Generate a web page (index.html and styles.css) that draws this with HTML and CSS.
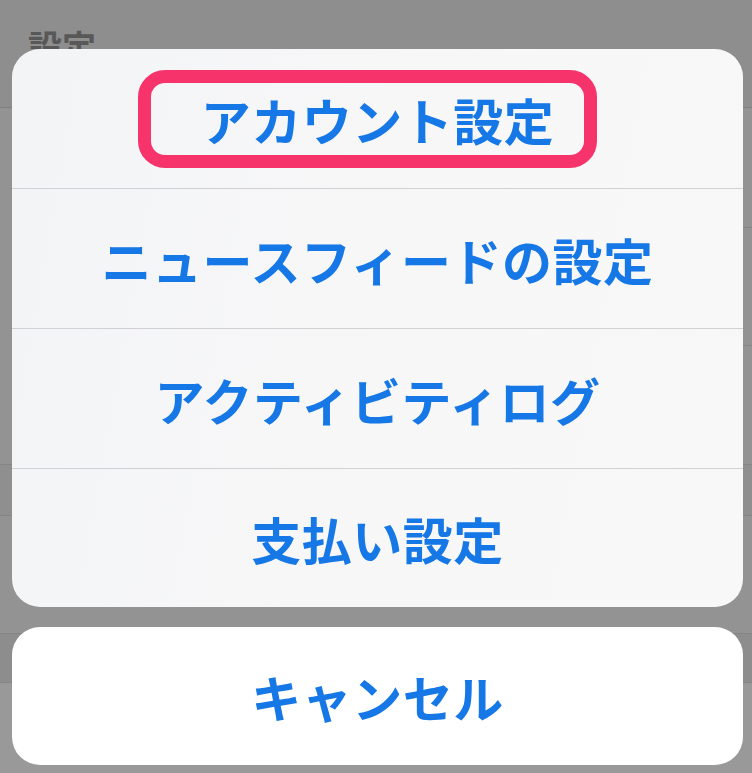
FILE: index.html
```html
<!DOCTYPE html>
<html lang="ja">
<head>
<meta charset="utf-8">
<link rel="stylesheet" href="styles.css">
</head>
<body>
<div class="backdrop">
  <div class="bd-head"><span class="bd-title">設定</span></div>
  <div class="bd-row inset h120"></div>
  <div class="bd-row inset h118"></div>
  <div class="bd-row h119"></div>
  <div class="bd-gap"></div>
  <div class="bd-row h118"></div>
  <div class="bd-row dark h49"></div>
  <div class="bd-rest"></div>
</div>

<div class="sheet">
  <div class="group">
    <div class="item first">
      <span class="mark"></span>
      <span class="label">アカウント設定</span>
    </div>
    <div class="item"><span class="label">ニュースフィードの設定</span></div>
    <div class="item"><span class="label">アクティビティログ</span></div>
    <div class="item"><span class="label">支払い設定</span></div>
  </div>
  <div class="cancel"><span class="label">キャンセル</span></div>
</div>
</body>
</html>
```

FILE: styles.css
```css
html, body {
  margin: 0;
  padding: 0;
}
body {
  width: 752px;
  height: 773px;
  overflow: hidden;
  position: relative;
  background: #969696;
  font-family: "Noto Sans CJK JP", "Noto Sans", sans-serif;
}

/* dimmed underlying list */
.backdrop {
  display: flex;
  flex-direction: column;
  height: 773px;
}
.bd-head {
  height: 107px;
  background: #8e8e8e;
  border-bottom: 1px solid #7f7f7f;
  position: relative;
}
.bd-title {
  position: absolute;
  left: 28px;
  top: 26px;
  font-size: 34px;
  font-weight: 700;
  color: #585858;
  line-height: 40px;
}
.bd-row {
  background: #939393;
  border-bottom: 1px solid #858585;
  box-sizing: border-box;
}
.bd-row.inset {
  border-bottom: none;
  background-image: linear-gradient(#858585, #858585);
  background-size: calc(100% - 30px) 1px;
  background-position: 30px 100%;
  background-repeat: no-repeat;
}
.h120 { height: 120px; }
.h118 { height: 118px; }
.h119 { height: 119px; }
.h49 { height: 49px; }
.bd-gap {
  height: 50px;
  background: #8f8f8f;
  border-bottom: 1px solid #858585;
}
.bd-row.dark { background: #8d8d8d; }
.bd-rest {
  flex: 1;
  background: #999999;
}

/* action sheet */
.sheet {
  position: absolute;
  left: 12px;
  top: 49px;
  width: 731px;
  display: flex;
  flex-direction: column;
  gap: 20px;
}
.group {
  background: linear-gradient(100deg, #f3f4f6 0%, #f7f7f8 45%, #f9f8f8 100%);
  border-radius: 28px;
  overflow: hidden;
  display: flex;
  flex-direction: column;
}
.item {
  height: 139px;
  display: flex;
  align-items: center;
  justify-content: center;
  border-top: 1.5px solid #d1d1d5;
  box-sizing: border-box;
  position: relative;
}
.item.first {
  border-top: none;
  height: 139px;
}
.item:nth-child(2), .item:nth-child(3) { height: 140px; }
.label {
  font-size: 50px;
  font-weight: 700;
  color: #1677e6;
  line-height: 1;
  letter-spacing: 0.5px;
}
.mark {
  position: absolute;
  left: 126px;
  top: 21px;
  width: 459px;
  height: 98px;
  box-sizing: border-box;
  border: 13px solid #f7336b;
  border-radius: 27px;
}
.cancel {
  height: 138px;
  background: #ffffff;
  border-radius: 28px;
  display: flex;
  align-items: center;
  justify-content: center;
}
```
